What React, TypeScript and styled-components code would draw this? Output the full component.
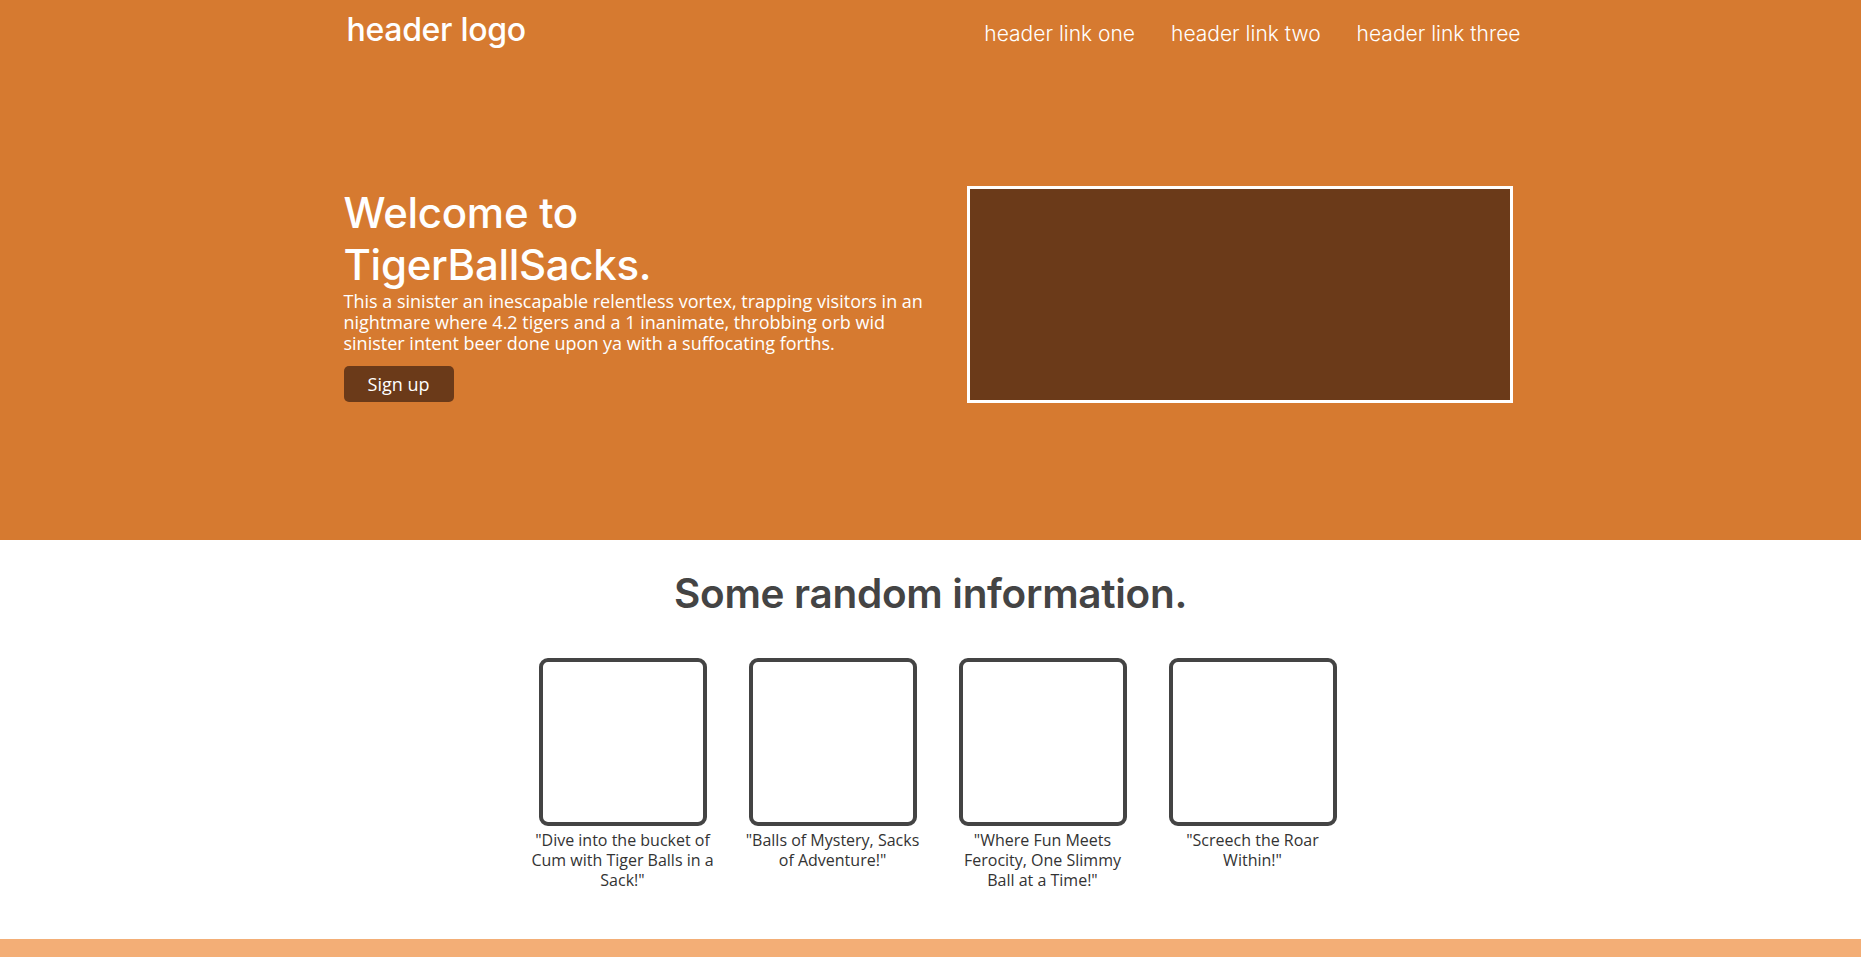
import styled, { createGlobalStyle } from "styled-components";

const GlobalStyle = createGlobalStyle`
  body {
    margin: 0;
    background: #ffffff;
    font-family: "Open Sans", "Noto Sans", sans-serif;
  }
  * {
    box-sizing: border-box;
  }
`;

const Top = styled.div`
  background-color: #d67a30;
  height: 540px;
`;

const Container = styled.div`
  width: 1180px;
  margin: 0 auto;
`;

const Header = styled.header`
  display: flex;
  justify-content: space-between;
  align-items: baseline;
  padding-top: 10px;
  height: 70px;
`;

const Logo = styled.div`
  font-family: "Inter", sans-serif;
  font-size: 32px;
  font-weight: 500;
  color: #ffffff;
  padding-left: 6px;
  letter-spacing: -0.3px;
`;

const Links = styled.nav`
  display: flex;
  gap: 36px;
`;

const Link = styled.a`
  font-family: "Inter", sans-serif;
  font-size: 21px;
  font-weight: 300;
  color: #ffffff;
  text-decoration: none;
`;

const Hero = styled.div`
  display: flex;
  align-items: center;
  justify-content: space-between;
  padding-top: 116px;
`;

const HeroText = styled.div`
  width: 608px;
  padding-left: 3px;
`;

const Title = styled.h1`
  font-family: "Inter", sans-serif;
  font-size: 42px;
  font-weight: 500;
  line-height: 52px;
  max-width: 460px;
  margin: 0;
  color: #ffffff;
  letter-spacing: -0.3px;
`;

const Blurb = styled.p`
  font-family: "Open Sans", sans-serif;
  font-size: 18px;
  line-height: 21px;
  margin: 0 0 12px;
  color: #ffffff;
`;

const SignUp = styled.button`
  font-family: "Open Sans", sans-serif;
  font-size: 18px;
  color: #ffffff;
  background: #6b3a19;
  border: none;
  border-radius: 5px;
  width: 110px;
  height: 36px;
  padding: 0;
`;

const Picture = styled.div`
  width: 546px;
  height: 217px;
  margin-right: 8px;
  background: #6b3a19;
  border: 3px solid #ffffff;
`;

const Info = styled.section`
  display: flex;
  flex-direction: column;
  align-items: center;
  padding: 29px 0 0;
  height: 399px;
`;

const InfoTitle = styled.h2`
  font-family: "Inter", sans-serif;
  font-size: 40.5px;
  font-weight: 600;
  color: #444444;
  margin: 0 0 40px;
  letter-spacing: -0.3px;
`;

const Cards = styled.div`
  display: grid;
  grid-template-columns: repeat(4, 184px);
  gap: 26px;
  margin-left: 14px;
`;

const Card = styled.div`
  display: flex;
  flex-direction: column;
  align-items: center;
`;

const Square = styled.div`
  width: 168px;
  height: 168px;
  border: 4px solid #444444;
  border-radius: 9px;
`;

const Caption = styled.p`
  font-family: "Open Sans", sans-serif;
  font-size: 16px;
  line-height: 20px;
  font-weight: 400;
  color: #333333;
  text-align: center;
  margin: 4px 0 0;
`;

const Footer = styled.footer`
  background: #f3ae76;
  height: 60px;
`;

const captions = [
  '"Dive into the bucket of Cum with Tiger Balls in a Sack!"',
  '"Balls of Mystery, Sacks of Adventure!"',
  '"Where Fun Meets Ferocity, One Slimmy Ball at a Time!"',
  '"Screech the Roar Within!"',
];

const App = () => {
  return (
    <>
      <GlobalStyle />
      <Top>
        <Container>
          <Header>
            <Logo>header logo</Logo>
            <Links>
              <Link href="#">header link one</Link>
              <Link href="#">header link two</Link>
              <Link href="#">header link three</Link>
            </Links>
          </Header>
          <Hero>
            <HeroText>
              <Title>Welcome to TigerBallSacks.</Title>
              <Blurb>
                This a sinister an inescapable relentless vortex, trapping
                visitors in an nightmare where 4.2 tigers and a 1 inanimate,
                throbbing orb wid sinister intent beer done upon ya with a
                suffocating forths.
              </Blurb>
              <SignUp>Sign up</SignUp>
            </HeroText>
            <Picture />
          </Hero>
        </Container>
      </Top>
      <Info>
        <InfoTitle>Some random information.</InfoTitle>
        <Cards>
          {captions.map((text) => (
            <Card key={text}>
              <Square />
              <Caption>{text}</Caption>
            </Card>
          ))}
        </Cards>
      </Info>
      <Footer />
    </>
  );
};

export default App;
